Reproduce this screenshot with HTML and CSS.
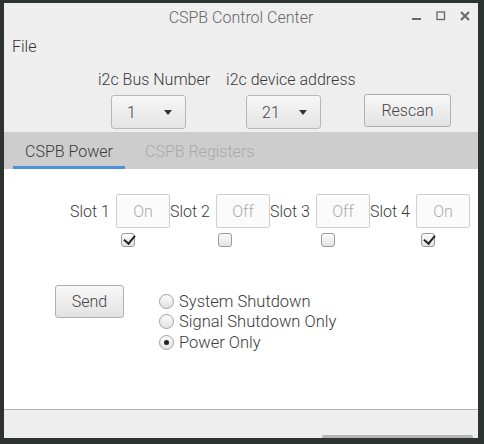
FILE: index.html
```html
<!DOCTYPE html>
<html>
<head>
<meta charset="utf-8">
<link rel="stylesheet" href="styles.css">
</head>
<body>
<div class="window">
  <div class="titlebar">
    <span class="title">CSPB Control Center</span>
    <div class="wm-buttons">
      <svg class="wm" width="12" height="12" viewBox="0 0 12 12"><rect x="1" y="8" width="9" height="2" fill="#666"/></svg>
      <svg class="wm" width="12" height="12" viewBox="0 0 12 12"><rect x="2" y="2" width="7.5" height="7.5" fill="none" stroke="#666" stroke-width="1.3"/></svg>
      <svg class="wm" width="12" height="12" viewBox="0 0 12 12"><path d="M2 2 L10 10 M10 2 L2 10" stroke="#666" stroke-width="2"/></svg>
    </div>
  </div>
  <div class="menubar"><span class="menu-item">File</span></div>
  <div class="header">
    <div class="label-row">
      <span class="hlabel bus">i2c Bus Number</span>
      <span class="hlabel addr">i2c device address</span>
    </div>
    <div class="control-row">
      <div class="combo combo-bus"><span>1</span><span class="arrow"></span></div>
      <div class="combo combo-addr"><span>21</span><span class="arrow"></span></div>
      <div class="btn rescan">Rescan</div>
    </div>
  </div>
  <div class="tabbar">
    <div class="tab active">CSPB Power</div>
    <div class="tab">CSPB Registers</div>
  </div>
  <div class="content">
    <div class="slots">
      <span class="slot-label">Slot 1</span><span class="entry">On</span>
      <span class="slot-label">Slot 2</span><span class="entry">Off</span>
      <span class="slot-label">Slot 3</span><span class="entry">Off</span>
      <span class="slot-label">Slot 4</span><span class="entry">On</span>
    </div>
    <div class="checks">
      <span class="check on c1"></span>
      <span class="check c2"></span>
      <span class="check c3"></span>
      <span class="check on c4"></span>
    </div>
    <div class="action">
      <div class="btn send">Send</div>
      <div class="radios">
        <div class="radio-row"><span class="radio"></span>System Shutdown</div>
        <div class="radio-row"><span class="radio"></span>Signal Shutdown Only</div>
        <div class="radio-row"><span class="radio on"></span>Power Only</div>
      </div>
    </div>
  </div>
  <div class="statusbar"><div class="scroll"></div></div>
</div>
</body>
</html>
```
FILE: styles.css
```css
* { box-sizing: border-box; }
html, body { margin: 0; padding: 0; }
body {
  width: 484px;
  height: 444px;
  background: #2d3331;
  font-family: Roboto, "Noto Sans", sans-serif;
  font-weight: 300;
  color: #3a3a3a;
  overflow: hidden;
}
.window {
  margin: 3px 0 0 4px;
  width: 474px;
  height: 435px;
  background: #eeeeee;
  display: flex;
  flex-direction: column;
}
.titlebar {
  height: 28px;
  display: flex;
  align-items: center;
  justify-content: center;
  position: relative;
}
.title {
  font-size: 16px;
  color: #666;
}
.wm-buttons {
  position: absolute;
  right: 7px;
  top: 7px;
  display: flex;
  gap: 12px;
}
.menubar {
  height: 26px;
  display: flex;
  align-items: center;
  padding-left: 8px;
  padding-top: 4px;
}
.menu-item { font-size: 16px; color: #333; }
.header {
  height: 75px;
  display: flex;
  flex-direction: column;
}
.label-row {
  display: flex;
  padding-top: 13px;
  height: 38px;
  font-size: 16px;
}
.hlabel.bus { margin-left: 94px; }
.hlabel.addr { margin-left: 16px; }
.control-row {
  display: flex;
  align-items: flex-start;
}
.combo {
  width: 75px;
  height: 34px;
  border: 1px solid #b8b8b8;
  border-radius: 3px;
  background: linear-gradient(#f7f7f7, #e4e4e4);
  display: flex;
  align-items: center;
  justify-content: space-between;
  padding: 0 13px 0 15px;
  font-size: 16px;
  color: #444;
}
.combo-bus { margin-left: 107px; margin-top: 0px; }
.combo-addr { margin-left: 60px; margin-top: 0px; }
.arrow {
  width: 0; height: 0;
  border-left: 4.5px solid transparent;
  border-right: 4.5px solid transparent;
  border-top: 5px solid #333;
}
.btn {
  border: 1px solid #b0b0b0;
  border-radius: 3px;
  background: linear-gradient(#f8f8f8, #e2e2e2);
  display: flex;
  align-items: center;
  justify-content: center;
  font-size: 16px;
  color: #444;
}
.rescan { width: 87px; height: 33px; margin-left: 43px; margin-top: -1px; }
.tabbar {
  height: 37px;
  background: #cdcdcd;
  display: flex;
  align-items: stretch;
  padding-left: 9px;
}
.tab {
  font-size: 16px;
  color: #a9a9a9;
  padding: 10px 12px 0 20px;
  border-bottom: 3px solid transparent;
}
.tab.active {
  color: #3a3a3a;
  border-bottom-color: #4a90d9;
  width: 112px;
  padding-left: 12px;
}
.content {
  height: 241px;
  background: #ffffff;
  border-bottom: 1px solid #b5b5b5;
  display: flex;
  flex-direction: column;
}
.slots {
  display: flex;
  align-items: center;
  margin-top: 25px;
  padding-left: 66px;
  font-size: 16px;
}
.slot-label { width: 46px; }
.entry {
  width: 54px;
  height: 34px;
  border: 1px solid #cfcfcf;
  border-radius: 2px;
  background: #fcfbfc;
  color: #aaa;
  display: flex;
  align-items: center;
  justify-content: center;
}
.checks {
  display: flex;
  margin-top: 5px;
  height: 14px;
}
.check {
  width: 14px;
  height: 14px;
  border: 1px solid #9a9a9a;
  border-radius: 3px;
  background: linear-gradient(#fbfbfb, #e4e4e4);
  position: relative;
}
.check.on::after {
  content: "";
  position: absolute;
  left: 4px;
  top: -1px;
  width: 5px;
  height: 9px;
  border-right: 2.8px solid #222;
  border-bottom: 2.8px solid #222;
  transform: rotate(40deg);
}
.c1 { margin-left: 117px; }
.c2 { margin-left: 83px; }
.c3 { margin-left: 89px; }
.c4 { margin-left: 86px; }
.action {
  display: flex;
  margin-top: 38px;
}
.send { width: 69px; height: 33px; margin-left: 51px; }
.radios {
  margin-left: 35px;
  margin-top: 6px;
  font-size: 16.5px;
  color: #3a3a3a;
}
.radio-row {
  display: flex;
  align-items: center;
  height: 20.5px;
}
.radio {
  width: 15px;
  height: 15px;
  border: 1px solid #a0a0a0;
  border-radius: 50%;
  background: linear-gradient(#fcfcfc, #e2e2e2);
  margin-right: 5px;
  position: relative;
}
.radio.on::after {
  content: "";
  position: absolute;
  left: 4px;
  top: 4px;
  width: 5px;
  height: 5px;
  border-radius: 50%;
  background: #222;
}
.statusbar {
  flex: 1;
  position: relative;
}
.scroll {
  position: absolute;
  left: 318px;
  right: 5px;
  bottom: 0;
  height: 3px;
  background: #b4b4b4;
  border-radius: 2px 2px 0 0;
}
```
